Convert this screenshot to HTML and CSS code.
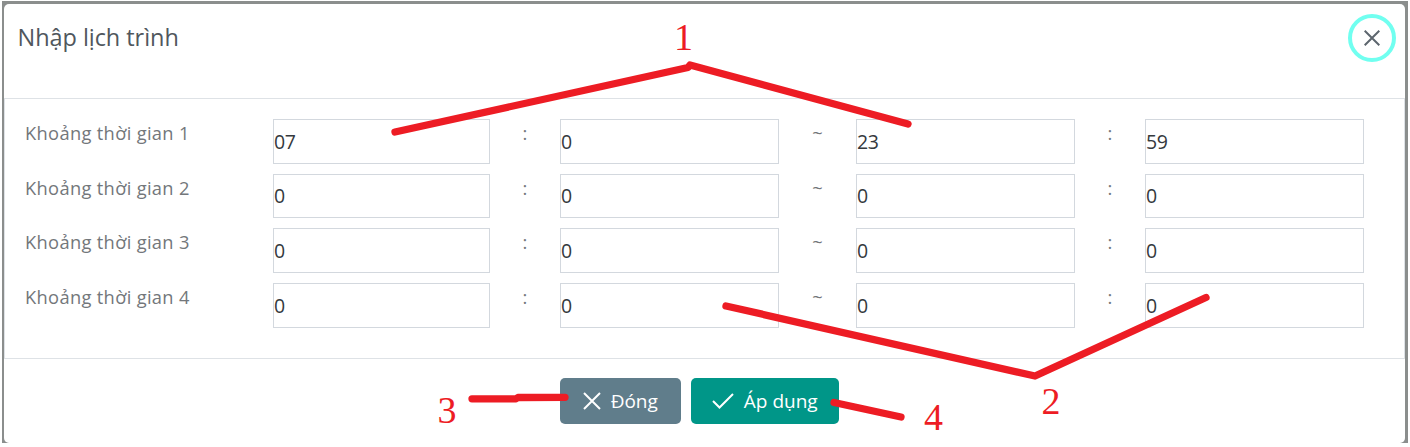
FILE: index.html
```html
<!DOCTYPE html>
<html lang="vi">
<head>
<meta charset="utf-8">
<title>Nhập lịch trình</title>
<link rel="stylesheet" href="styles.css">
</head>
<body>
<div class="backdrop">
  <section class="dialog">
    <header class="dialog-header">
      <h1 class="title">Nhập lịch trình</h1>
      <button class="close" aria-label="Đóng"><svg width="16" height="16" viewBox="0 0 16 16"><path d="M.7.7 15.3 15.3M15.3.7.7 15.3"/></svg></button>
    </header>
    <div class="dialog-body">
      <div class="row"><span class="label">Khoảng thời gian 1</span><input class="field" value="07"><span class="sep">:</span><input class="field" value="0"><span class="sep">~</span><input class="field" value="23"><span class="sep">:</span><input class="field" value="59"></div>
      <div class="row"><span class="label">Khoảng thời gian 2</span><input class="field" value="0"><span class="sep">:</span><input class="field" value="0"><span class="sep">~</span><input class="field" value="0"><span class="sep">:</span><input class="field" value="0"></div>
      <div class="row"><span class="label">Khoảng thời gian 3</span><input class="field" value="0"><span class="sep">:</span><input class="field" value="0"><span class="sep">~</span><input class="field" value="0"><span class="sep">:</span><input class="field" value="0"></div>
      <div class="row"><span class="label">Khoảng thời gian 4</span><input class="field" value="0"><span class="sep">:</span><input class="field" value="0"><span class="sep">~</span><input class="field" value="0"><span class="sep">:</span><input class="field" value="0"></div>
    </div>
    <footer class="dialog-footer">
      <button class="btn btn-cancel"><svg width="18" height="18" viewBox="0 0 18 18"><path d="M1 1 17 17M17 1 1 17"/></svg><span class="cancel-text">Đóng</span></button>
      <button class="btn btn-apply"><svg width="22" height="16" viewBox="0 0 22 16"><path d="M1 8 7.5 14.5 21 1"/></svg><span class="apply-text">Áp dụng</span></button>
    </footer>
  </section>
</div>
<svg class="notes" width="1410" height="447" viewBox="0 0 1410 447">
  <g class="strokes">
    <path d="M395 132 688 67.500 690 65 908 124"/>
    <path d="M726 306 1035 376 1206 297.500"/>
    <path d="M472 398.800H516L518 397.500 565 397.300"/>
    <path d="M834 402.500 901 417"/>
  </g>
  <g class="numbers">
    <text x="674" y="50">1</text>
    <text x="1041.500" y="413.500">2</text>
    <text x="437.500" y="423">3</text>
    <text x="924" y="430">4</text>
  </g>
</svg>
</body>
</html>
```
FILE: styles.css
```css
* { box-sizing: border-box; }
body { margin: 0; background: #fff; font-family: "Open Sans", "Noto Sans", sans-serif; overflow: hidden; }
.backdrop { width: 1406px; height: 442px; margin: 1px 0 0 2px; padding: 3px 3px 0 1.500px; background: #8b8e8d; }
.dialog { height: 439px; background: #fff; border-radius: 5px; }
.dialog-header { height: 94px; padding: 9.500px 9.500px 0 14px; display: flex; justify-content: space-between; align-items: flex-start; }
.title { margin: 7.500px 0 0; font-size: 23.500px; line-height: 32px; font-weight: 500; letter-spacing: -.05px; color: #50575d; }
.close { width: 48px; height: 48px; padding: 0; border: 4px solid #71fff0; border-radius: 50%; background: #fff; display: grid; place-items: center; }
.close svg { fill: none; stroke: #5d666e; stroke-width: 2; }
.dialog-body { height: 261px; padding: 20px 0 0 20.500px; border: 1px solid #dee2e6; display: flex; flex-direction: column; gap: 10.200px; }
.row { display: grid; grid-template-columns: 248px 217px 70px 219px 77px 219px 70px 218.500px; height: 44.500px; }
.label, .sep { font-size: 18.300px; line-height: 28px; color: #73777b; white-space: nowrap; }
.label { letter-spacing: .33px; }
.sep { text-align: center; }
.field { width: 100%; height: 44.500px; padding: 0; border: 1.500px solid #d3d8de; border-radius: 0; font: 19.500px/28px "Open Sans", "Noto Sans", sans-serif; letter-spacing: -.3px; color: #35393d; background: #fff; outline: 0; }
.dialog-footer { padding: 19px 0 0 556.500px; display: flex; gap: 10px; }
.btn { height: 45.500px; padding: 0; border: 0; border-radius: 5px; display: flex; align-items: center; justify-content: center; gap: 10px; color: #fff; font: 500 19px/28px "Open Sans", "Noto Sans", sans-serif; }
.btn svg { fill: none; stroke: #fff; stroke-width: 2; }
.btn-cancel { width: 120.500px; background: #607d8b; }
.btn-apply { width: 148.500px; background: #009688; }
.notes { position: absolute; left: 0; top: 0; pointer-events: none; }
.strokes { fill: none; stroke: #ed1c24; stroke-width: 7.300; stroke-linecap: round; stroke-linejoin: round; }
.numbers { fill: #ed1c24; font: 38px "Liberation Serif", serif; }
```
